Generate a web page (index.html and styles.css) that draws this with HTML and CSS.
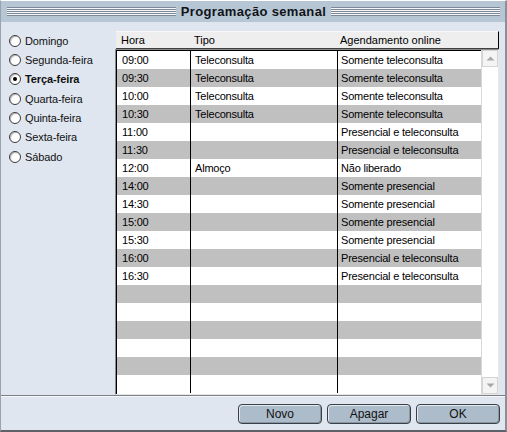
FILE: index.html
```html
<!DOCTYPE html>
<html lang="pt">
<head>
<meta charset="utf-8">
<title>Programação semanal</title>
<link rel="stylesheet" href="styles.css">
</head>
<body>
<div class="window">
  <div class="titlebar">
    <span class="grip"></span>
    <span class="title">Programação semanal</span>
    <span class="grip"></span>
  </div>
  <div class="main">
    <ul class="days">
      <li class="day"><span class="radio"></span>Domingo</li>
      <li class="day"><span class="radio"></span>Segunda-feira</li>
      <li class="day selected"><span class="radio"></span>Terça-feira</li>
      <li class="day"><span class="radio"></span>Quarta-feira</li>
      <li class="day"><span class="radio"></span>Quinta-feira</li>
      <li class="day"><span class="radio"></span>Sexta-feira</li>
      <li class="day"><span class="radio"></span>Sábado</li>
    </ul>
    <div class="grid">
      <div class="head">
        <span class="c1">Hora</span>
        <span class="c2">Tipo</span>
        <span class="c3">Agendamento online</span>
      </div>
      <div class="body">
        <div class="rows">
          <div class="row"><span class="c1">09:00</span><span class="c2">Teleconsulta</span><span class="c3">Somente teleconsulta</span></div>
          <div class="row"><span class="c1">09:30</span><span class="c2">Teleconsulta</span><span class="c3">Somente teleconsulta</span></div>
          <div class="row"><span class="c1">10:00</span><span class="c2">Teleconsulta</span><span class="c3">Somente teleconsulta</span></div>
          <div class="row"><span class="c1">10:30</span><span class="c2">Teleconsulta</span><span class="c3">Somente teleconsulta</span></div>
          <div class="row"><span class="c1">11:00</span><span class="c2"></span><span class="c3">Presencial e teleconsulta</span></div>
          <div class="row"><span class="c1">11:30</span><span class="c2"></span><span class="c3">Presencial e teleconsulta</span></div>
          <div class="row"><span class="c1">12:00</span><span class="c2">Almoço</span><span class="c3">Não liberado</span></div>
          <div class="row"><span class="c1">14:00</span><span class="c2"></span><span class="c3">Somente presencial</span></div>
          <div class="row"><span class="c1">14:30</span><span class="c2"></span><span class="c3">Somente presencial</span></div>
          <div class="row"><span class="c1">15:00</span><span class="c2"></span><span class="c3">Somente presencial</span></div>
          <div class="row"><span class="c1">15:30</span><span class="c2"></span><span class="c3">Somente presencial</span></div>
          <div class="row"><span class="c1">16:00</span><span class="c2"></span><span class="c3">Presencial e teleconsulta</span></div>
          <div class="row"><span class="c1">16:30</span><span class="c2"></span><span class="c3">Presencial e teleconsulta</span></div>
          <div class="row"><span class="c1"></span><span class="c2"></span><span class="c3"></span></div>
          <div class="row"><span class="c1"></span><span class="c2"></span><span class="c3"></span></div>
          <div class="row"><span class="c1"></span><span class="c2"></span><span class="c3"></span></div>
          <div class="row"><span class="c1"></span><span class="c2"></span><span class="c3"></span></div>
          <div class="row"><span class="c1"></span><span class="c2"></span><span class="c3"></span></div>
          <div class="row"><span class="c1"></span><span class="c2"></span><span class="c3"></span></div>
        </div>
        <div class="scrollbar">
          <span class="sbtn"><svg width="9" height="5" viewBox="0 0 9 5"><path d="M0.5 4.5 L4.5 0.5 L8.5 4.5 Z" fill="#a8a8a8"/></svg></span>
          <span class="track"></span>
          <span class="sbtn"><svg width="9" height="5" viewBox="0 0 9 5"><path d="M0.5 0.5 L4.5 4.5 L8.5 0.5 Z" fill="#a8a8a8"/></svg></span>
        </div>
      </div>
    </div>
  </div>
  <div class="footer">
    <button class="btn">Novo</button>
    <button class="btn">Apagar</button>
    <button class="btn">OK</button>
  </div>
</div>
</body>
</html>
```

FILE: styles.css
```css
* { box-sizing: border-box; }
html, body { margin: 0; padding: 0; background: #dfe6ef; }
body { font-family: "Liberation Sans", Arial, sans-serif; font-size: 11px; color: #000; }

.window {
  width: 507px;
  height: 432px;
  display: flex;
  flex-direction: column;
  background: #dfe6ef;
  border-left: 1px solid #9aa3ad;
  border-top: 1px solid #ffffff;
  border-right: 2px solid #8a9098;
  border-bottom: 2px solid #5e6268;
}

.titlebar {
  height: 21px;
  flex: none;
  display: flex;
  align-items: center;
  gap: 5px;
  padding: 0 5px 0 6px;
  background: #b7c6d5;
}
.grip {
  flex: 1;
  height: 9px;
  background: repeating-linear-gradient(to bottom, #7d8996 0, #7d8996 1px, #f4f6f8 1px, #f4f6f8 2px);
  border-bottom: 1px solid #7d8996;
}
.title {
  font-weight: bold;
  font-size: 13px;
  letter-spacing: 0.35px;
  color: #101418;
}

.main {
  flex: 1;
  display: flex;
  padding-top: 9px;
  border-bottom: 1px solid #7a8088;
  box-shadow: 0 1px 0 #f6f8fa;
}

.days {
  list-style: none;
  margin: 0;
  padding: 0 0 0 8px;
  width: 114px;
  flex: none;
}
.day {
  height: 19.33px;
  display: flex;
  align-items: center;
  gap: 4px;
  letter-spacing: -0.1px;
  color: #111;
}
.day.selected { font-weight: bold; }
.radio {
  width: 12px;
  height: 12px;
  border-radius: 50%;
  border: 1px solid #3c3c3c;
  background: #fff;
  box-shadow: inset 1px 1px 1px #b8b8b8;
  position: relative;
  flex: none;
}
.day.selected .radio::after {
  content: "";
  position: absolute;
  left: 3px;
  top: 3px;
  width: 4px;
  height: 4px;
  border-radius: 50%;
  background: #000;
}

.grid {
  width: 384px;
  flex: none;
  display: flex;
  flex-direction: column;
  height: 364px;
}
.head {
  height: 18px;
  flex: none;
  display: flex;
  align-items: center;
  background: #eeeeee;
  border-top: 1px solid #f8f8f8;
  border-right: 1px solid #000;
  border-bottom: 1px solid #404040;
  margin-left: 1px;
}
.head .c1 { width: 75px; padding-left: 5px; }
.head .c2 { width: 147px; padding-left: 3px; }
.head .c3 { flex: 1; padding-left: 2px; }

.body {
  flex: 1;
  display: flex;
  border-left: 1px solid #8a8a8a;
  border-top: 1px solid #8a8a8a;
  border-right: 1px solid #e8e8e8;
  border-bottom: 1px solid #e8e8e8;
  background: #fff;
}
.rows {
  flex: 1;
  border-left: 1px solid #000;
  border-top: 1px solid #000;
  display: flex;
  flex-direction: column;
}
.row {
  height: 18px;
  flex: none;
  display: flex;
  background: #fff;
}
.row:nth-child(even) { background: #c0c0c0; }
.row span {
  display: flex;
  align-items: center;
  letter-spacing: -0.2px;
}
.row .c1 { width: 74px; padding-left: 5px; border-right: 1px solid #000; }
.row .c2 { width: 147px; padding-left: 4px; border-right: 1px solid #000; }
.row .c3 { flex: 1; padding-left: 3px; }

.scrollbar {
  width: 17px;
  flex: none;
  display: flex;
  flex-direction: column;
  background: #fff;
  border-left: 1px solid #d8d8d8;
}
.sbtn {
  height: 17px;
  flex: none;
  display: flex;
  align-items: center;
  justify-content: center;
  background: #f4f4f4;
  border: 1px solid #d4d4d4;
}
.track { flex: 1; }

.footer {
  flex: 1;
  display: flex;
  justify-content: flex-end;
  align-items: center;
  gap: 5px;
  padding: 2px 5px 0 0;
}
.btn {
  width: 84px;
  height: 20px;
  font-family: "Liberation Sans", Arial, sans-serif;
  font-size: 12px;
  color: #111;
  background: #adbccb;
  border: 1px solid #3a3f45;
  border-radius: 4px;
  box-shadow: inset 1px 1px 0 #e4eaf0, inset -1px -1px 0 #8896a4;
  padding: 0;
}
```
